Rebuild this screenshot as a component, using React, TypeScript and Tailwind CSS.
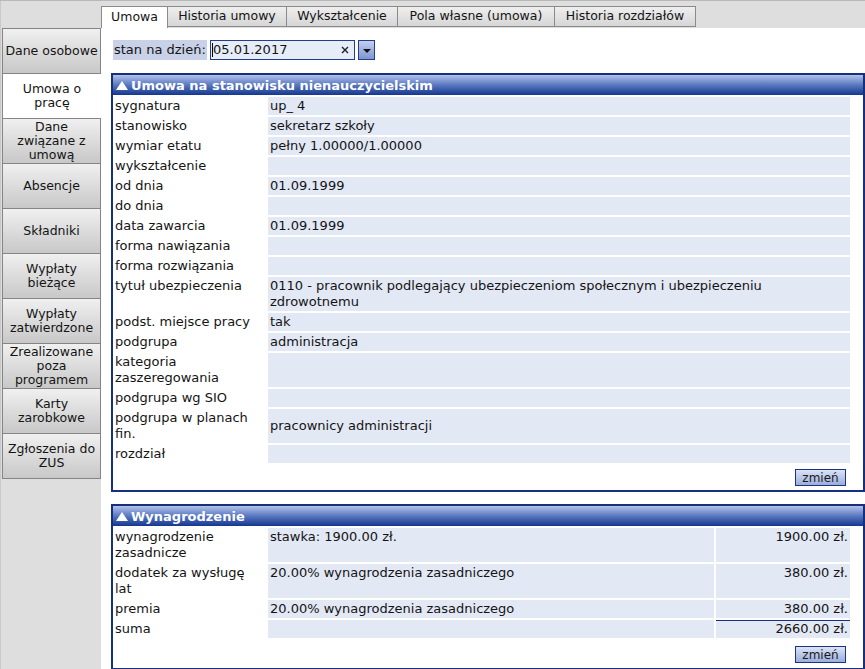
import React from 'react';

type Row = { label: string; value: string };

const sideItems: { lines: string[]; active?: boolean }[] = [
  { lines: ['Dane osobowe'] },
  { lines: ['Umowa o', 'pracę'], active: true },
  { lines: ['Dane', 'związane z', 'umową'] },
  { lines: ['Absencje'] },
  { lines: ['Składniki'] },
  { lines: ['Wypłaty', 'bieżące'] },
  { lines: ['Wypłaty', 'zatwierdzone'] },
  { lines: ['Zrealizowane', 'poza', 'programem'] },
  { lines: ['Karty', 'zarobkowe'] },
  { lines: ['Zgłoszenia do', 'ZUS'] },
];

const tabs = [
  { label: 'Umowa', w: 'w-[67px]', active: true },
  { label: 'Historia umowy', w: 'w-[119px]' },
  { label: 'Wykształcenie', w: 'w-[111px]' },
  { label: 'Pola własne (umowa)', w: 'w-[157px]' },
  { label: 'Historia rozdziałów', w: 'w-[141px]' },
];

const contractRows: Row[] = [
  { label: 'sygnatura', value: 'up_ 4' },
  { label: 'stanowisko', value: 'sekretarz szkoły' },
  { label: 'wymiar etatu', value: 'pełny 1.00000/1.00000' },
  { label: 'wykształcenie', value: '' },
  { label: 'od dnia', value: '01.09.1999' },
  { label: 'do dnia', value: '' },
  { label: 'data zawarcia', value: '01.09.1999' },
  { label: 'forma nawiązania', value: '' },
  { label: 'forma rozwiązania', value: '' },
  {
    label: 'tytuł ubezpieczenia',
    value: '0110 - pracownik podlegający ubezpieczeniom społecznym i ubezpieczeniu zdrowotnemu',
  },
  { label: 'podst. miejsce pracy', value: 'tak' },
  { label: 'podgrupa', value: 'administracja' },
  { label: 'kategoria\nzaszeregowania', value: '' },
  { label: 'podgrupa wg SIO', value: '' },
  { label: 'podgrupa w planach\nfin.', value: 'pracownicy administracji' },
  { label: 'rozdział', value: '' },
];

const salaryRows = [
  { label: 'wynagrodzenie\nzasadnicze', desc: 'stawka: 1900.00 zł.', amount: '1900.00 zł.' },
  { label: 'dodatek za wysługę\nlat', desc: '20.00% wynagrodzenia zasadniczego', amount: '380.00 zł.' },
  { label: 'premia', desc: '20.00% wynagrodzenia zasadniczego', amount: '380.00 zł.' },
];

function PanelHeader({ title }: { title: string }) {
  return (
    <div className="h-[20px] shrink-0 flex items-center gap-[3px] pl-[3px] bg-linear-to-b from-[#b3c2e9] via-[#5a78c0] to-[#15368f] text-white font-bold text-[13px] leading-none">
      <svg width="12" height="9" viewBox="0 0 12 9">
        <path d="M6 0 L12 9 L0 9 Z" fill="white" />
      </svg>
      <span>{title}</span>
    </div>
  );
}

function ChangeButton() {
  return (
    <button className="w-[51px] h-[17px] border border-[#1c3383] bg-linear-to-b from-[#dce3f5] to-[#9aaddc] text-[12px] leading-none text-[#1a1a1a]">
      zmień
    </button>
  );
}

export default function App() {
  return (
    <div className="w-[865px] h-[669px] flex overflow-hidden bg-[#dedede] border-t border-[#b8b8b8] font-['DejaVu_Sans',Verdana,sans-serif] text-[#141414]">
      {/* left menu */}
      <aside className="w-[101px] shrink-0 pt-[27px] pl-[1px] border-l border-[#c9c9c9]">
        <div className="w-[99px] border-t border-[#858585]">
          {sideItems.map((item) =>
            item.active ? (
              <div
                key={item.lines.join()}
                className="h-[45px] w-[99px] bg-white border-l border-b border-[#858585] flex flex-col items-center justify-center text-[12.5px] leading-[14px]"
              >
                {item.lines.map((l) => (
                  <span key={l} className="whitespace-nowrap">{l}</span>
                ))}
              </div>
            ) : (
              <div
                key={item.lines.join()}
                className="h-[45px] w-[99px] bg-linear-to-b from-[#f0f0f0] to-[#c8c8c8] border-x border-b border-[#858585] flex flex-col items-center justify-center text-[12.5px] leading-[14px]"
              >
                {item.lines.map((l) => (
                  <span key={l} className="whitespace-nowrap">{l}</span>
                ))}
              </div>
            )
          )}
        </div>
      </aside>

      <main className="flex-1 flex flex-col min-w-0">
        {/* tabs */}
        <div className="h-[27px] flex items-end shrink-0">
          {tabs.map((t) =>
            t.active ? (
              <div
                key={t.label}
                className={`${t.w} h-[22px] bg-white border-x border-t border-[#8a8a8a] flex items-center justify-center text-[12.5px]`}
              >
                {t.label}
              </div>
            ) : (
              <div
                key={t.label}
                className={`${t.w} h-[21px] mb-[1px] bg-linear-to-b from-[#efefef] to-[#d6d6d6] border-t border-r border-b border-[#8a8a8a] flex items-center justify-center text-[12.5px]`}
              >
                {t.label}
              </div>
            )
          )}
        </div>

        <div className="flex-1 bg-white pl-[10px]">
          {/* date picker */}
          <div className="mt-[12px] ml-[2px] flex items-center h-[20px] text-[13px]">
            <div className="h-[20px] w-[94px] bg-[#c8d1e7] pl-[1px] flex items-center">stan na dzień:</div>
            <div className="ml-[3px] h-[20px] w-[145px] border border-[#213d8c] bg-[#e6ecf8] flex items-center pl-[1px] pr-[5px]">
              <span className="w-px h-[14px] bg-black" />
              <span className="flex-1">05.01.2017</span>
              <svg width="8" height="8" viewBox="0 0 8 8">
                <path d="M1 1 L7 7 M7 1 L1 7" stroke="#222" strokeWidth="1.4" />
              </svg>
            </div>
            <div className="ml-[3px] h-[20px] w-[17px] border border-[#213d8c] bg-linear-to-b from-[#c3cfee] to-[#7f96d2] flex items-end justify-center pb-[6px]">
              <svg width="8" height="4" viewBox="0 0 8 4">
                <path d="M0 0 L8 0 L4 4 Z" fill="#111" />
              </svg>
            </div>
          </div>

          {/* contract panel */}
          <section className="mt-[13px] w-[754px] h-[419px] border-2 border-[#17307e] flex flex-col">
            <PanelHeader title="Umowa na stanowisku nienauczycielskim" />
            <table className="w-[739px] table-fixed border-separate border-spacing-[2px] text-[13px] leading-[16px]">
              <colgroup>
                <col className="w-[151px]" />
                <col />
              </colgroup>
              <tbody>
                {contractRows.map((r) => (
                  <tr key={r.label}>
                    <td className="py-[1px] align-top whitespace-pre-line">{r.label}</td>
                    <td className="py-[1px] pl-[2px] align-middle bg-[#e3e8f5]">{r.value}</td>
                  </tr>
                ))}
              </tbody>
            </table>
            <div className="mt-[4px] flex justify-end pr-[17px]">
              <ChangeButton />
            </div>
          </section>

          {/* salary panel */}
          <section className="mt-[12px] w-[754px] h-[166px] border-2 border-[#17307e] flex flex-col">
            <PanelHeader title="Wynagrodzenie" />
            <table className="w-[739px] table-fixed border-separate border-spacing-[2px] text-[13px] leading-[16px]">
              <colgroup>
                <col className="w-[151px]" />
                <col className="w-[446px]" />
                <col className="w-[134px]" />
              </colgroup>
              <tbody>
                {salaryRows.map((r) => (
                  <tr key={r.label}>
                    <td className="py-[1px] align-top whitespace-pre-line">{r.label}</td>
                    <td className="py-[1px] pl-[2px] align-top bg-[#e3e8f5]">{r.desc}</td>
                    <td className="py-[1px] pr-[2px] align-top text-right bg-[#e3e8f5]">{r.amount}</td>
                  </tr>
                ))}
                <tr>
                  <td className="py-[1px] align-top">suma</td>
                  <td className="py-[1px] bg-[#e3e8f5]" />
                  <td className="pb-[1px] pr-[2px] align-top text-right bg-[#e3e8f5] border-t border-[#17307e]">
                    2660.00 zł.
                  </td>
                </tr>
              </tbody>
            </table>
            <div className="mt-[6px] flex justify-end pr-[17px]">
              <ChangeButton />
            </div>
          </section>
        </div>
      </main>
    </div>
  );
}
